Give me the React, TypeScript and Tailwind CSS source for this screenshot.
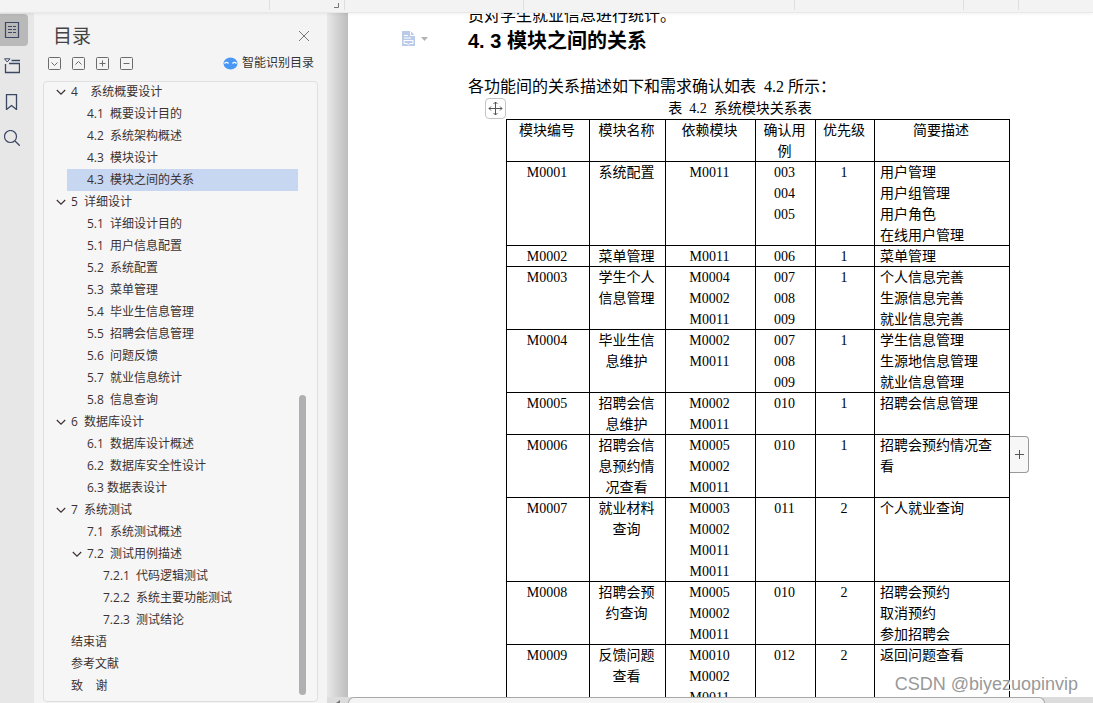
import cn from "clsx";
import type { ReactNode } from "react";

type OutlineItem = {
  level: 1 | 2 | 3;
  label: string;
  open?: boolean;
  active?: boolean;
};

type ModuleRow = {
  id: string;
  name: string;
  depends: string[];
  cases: string[];
  priority: number;
  description: string[];
};

const outline: OutlineItem[] = [
  { level: 1, label: "4    系统概要设计", open: true },
  { level: 2, label: "4.1  概要设计目的" },
  { level: 2, label: "4.2  系统架构概述" },
  { level: 2, label: "4.3  模块设计" },
  { level: 2, label: "4.3  模块之间的关系", active: true },
  { level: 1, label: "5  详细设计", open: true },
  { level: 2, label: "5.1  详细设计目的" },
  { level: 2, label: "5.1  用户信息配置" },
  { level: 2, label: "5.2  系统配置" },
  { level: 2, label: "5.3  菜单管理" },
  { level: 2, label: "5.4  毕业生信息管理" },
  { level: 2, label: "5.5  招聘会信息管理" },
  { level: 2, label: "5.6  问题反馈" },
  { level: 2, label: "5.7  就业信息统计" },
  { level: 2, label: "5.8  信息查询" },
  { level: 1, label: "6  数据库设计", open: true },
  { level: 2, label: "6.1  数据库设计概述" },
  { level: 2, label: "6.2  数据库安全性设计" },
  { level: 2, label: "6.3 数据表设计" },
  { level: 1, label: "7  系统测试", open: true },
  { level: 2, label: "7.1  系统测试概述" },
  { level: 2, label: "7.2  测试用例描述", open: true },
  { level: 3, label: "7.2.1  代码逻辑测试" },
  { level: 3, label: "7.2.2  系统主要功能测试" },
  { level: 3, label: "7.2.3  测试结论" },
  { level: 1, label: "结束语" },
  { level: 1, label: "参考文献" },
  { level: 1, label: "致    谢" },
];

const modules: ModuleRow[] = [
  {
    id: "M0001",
    name: "系统配置",
    depends: ["M0011"],
    cases: ["003", "004", "005"],
    priority: 1,
    description: ["用户管理", "用户组管理", "用户角色", "在线用户管理"],
  },
  {
    id: "M0002",
    name: "菜单管理",
    depends: ["M0011"],
    cases: ["006"],
    priority: 1,
    description: ["菜单管理"],
  },
  {
    id: "M0003",
    name: "学生个人信息管理",
    depends: ["M0004", "M0002", "M0011"],
    cases: ["007", "008", "009"],
    priority: 1,
    description: ["个人信息完善", "生源信息完善", "就业信息完善"],
  },
  {
    id: "M0004",
    name: "毕业生信息维护",
    depends: ["M0002", "M0011"],
    cases: ["007", "008", "009"],
    priority: 1,
    description: ["学生信息管理", "生源地信息管理", "就业信息管理"],
  },
  {
    id: "M0005",
    name: "招聘会信息维护",
    depends: ["M0002", "M0011"],
    cases: ["010"],
    priority: 1,
    description: ["招聘会信息管理"],
  },
  {
    id: "M0006",
    name: "招聘会信息预约情况查看",
    depends: ["M0005", "M0002", "M0011"],
    cases: ["010"],
    priority: 1,
    description: ["招聘会预约情况查看"],
  },
  {
    id: "M0007",
    name: "就业材料查询",
    depends: ["M0003", "M0002", "M0011", "M0011"],
    cases: ["011"],
    priority: 2,
    description: ["个人就业查询"],
  },
  {
    id: "M0008",
    name: "招聘会预约查询",
    depends: ["M0005", "M0002", "M0011"],
    cases: ["010"],
    priority: 2,
    description: ["招聘会预约", "取消预约", "参加招聘会"],
  },
  {
    id: "M0009",
    name: "反馈问题查看",
    depends: ["M0010", "M0002", "M0011"],
    cases: ["012"],
    priority: 2,
    description: ["返回问题查看"],
  },
];

const columns = [
  { title: "模块编号", width: "w-[83px]" },
  { title: "模块名称", width: "w-[76px]" },
  { title: "依赖模块", width: "w-[90px]" },
  { title: "确认用例", width: "w-[60px]" },
  { title: "优先级", width: "w-[59px]" },
  { title: "简要描述", width: "w-[135px]" },
];

const Stroke = ({
  children,
  className,
  size = 16,
}: {
  children: ReactNode;
  className?: string;
  size?: number;
}) => (
  <svg
    width={size}
    height={size}
    viewBox={`0 0 ${size} ${size}`}
    fill="none"
    stroke="currentColor"
    className={cn("shrink-0", className)}
    aria-hidden
  >
    {children}
  </svg>
);

const railButtons = [
  {
    name: "目录",
    icon: (
      <>
        <path d="M1.500 .5h13v15h-13z" strokeWidth="1.2" />
        <path d="M4 4.500h4M9 4.500h3M4 7.500h4M9 7.500h3M4 10.500h4M9 10.500h3" />
      </>
    ),
  },
  {
    name: "章节",
    icon: (
      <>
        <path d="M.5 .8h5.500L3.200 4z" />
        <path d="M7.500 2.500H16M1.500 6v8.500h14v-9H5" strokeWidth="1.3" />
      </>
    ),
  },
  {
    name: "书签",
    icon: <path d="M2.500 .7h10v14.800l-5-4-5 4z" strokeWidth="1.3" />,
  },
  {
    name: "查找",
    icon: (
      <>
        <circle cx="6.500" cy="6.500" r="6" strokeWidth="1.2" />
        <path d="m11 11 4.800 4.800" strokeWidth="1.3" />
      </>
    ),
  },
];

const levelButtons = [
  { name: "展开", path: "m3.500 5.500 3 3 3-3" },
  { name: "收起", path: "m3.500 7.500 3-3 3 3" },
  { name: "全部展开", path: "M3.500 6.500h6M6.500 3.500v6" },
  { name: "全部收起", path: "M3.500 6.500h6" },
];

const Toolbar = () => (
  <header className="relative z-10 flex h-[13px] shrink-0 border-b border-[#e8e8e8] bg-[#f3f3f3] shadow-[0_1px_3px_rgba(0,0,0,0.06)]">
    <div className="h-2.5 w-[270px] border-r border-[#dedede]" />
    <div className="flex h-2.5 w-[75px] items-end justify-end border-r border-[#dedede]">
      <Stroke size={5} className="mr-[5px] mb-0.5 text-[#777]">
        <path d="M4.500 0v4.500H0" />
      </Stroke>
    </div>
    <div className="h-2.5 w-[179px] border-r border-[#dedede]" />
    <div className="h-2.5 w-[271px] border-r border-[#dedede]" />
    <div className="h-2.5 w-[169px] border-r border-[#dedede]" />
    <div className="h-2.5 w-[55px] border-r border-[#dedede]" />
  </header>
);

const Rail = () => (
  <nav
    aria-label="导航窗格"
    className="flex w-[34px] shrink-0 flex-col gap-1 bg-[#e7e7e7] pt-px text-[#3b4763]"
  >
    {railButtons.map(({ name, icon }, index) => (
      <button
        key={name}
        type="button"
        aria-label={name}
        className={cn("flex h-8 w-7 items-center rounded-r pl-1", {
          "bg-[#b9b9b9]": index === 0,
        })}
      >
        <Stroke>{icon}</Stroke>
      </button>
    ))}
  </nav>
);

const OutlineRow = ({ level, label, open, active }: OutlineItem) => (
  <li
    className={cn({
      "ml-[7px]": level === 1,
      "ml-[23px]": level === 2,
      "ml-[39px]": level === 3,
    })}
  >
    <a
      href="#section"
      aria-current={active}
      className={cn(
        "flex h-[22px] items-center pl-[5px] whitespace-pre",
        { "bg-[#c7d6f1]": active },
      )}
    >
      <span className="w-[15px]">
        {open && (
          <Stroke size={10}>
            <path d="m.8 3 4.200 4.200L9.200 3" strokeWidth="1.2" />
          </Stroke>
        )}
      </span>
      {label}
    </a>
  </li>
);

const OutlinePanel = () => (
  <aside className="flex w-[293px] shrink-0 flex-col bg-[#f4f4f4] px-[9px] text-[#3c3230]">
    <div className="flex items-center justify-between pt-2 pr-2 pl-[10px]">
      <h2 className="text-[19px] leading-[30px] text-[#444]">目录</h2>
      <button type="button" aria-label="关闭" className="text-[#777]">
        <Stroke size={12}>
          <path d="m1 1 10 10M11 1 1 11" />
        </Stroke>
      </button>
    </div>
    <div className="flex h-6 items-center pr-1 pl-[5px]">
      <div className="flex gap-[11px] text-[#6b6b6b]">
        {levelButtons.map(({ name, path }) => (
          <button key={name} type="button" aria-label={name}>
            <Stroke size={13}>
              <rect x=".5" y=".5" width="12" height="12" rx="1" />
              <path d={path} />
            </Stroke>
          </button>
        ))}
      </div>
      <button
        type="button"
        className="ml-auto flex items-center gap-1 text-xs text-[#333]"
      >
        <svg width="15" height="13" viewBox="0 0 15 13" aria-hidden>
          <ellipse cx="7.500" cy="6.500" rx="7" ry="6" fill="#4a98f5" />
          <path
            d="M1.500 6.500q2-2.400 4 0M9.500 6.500q2-2.400 4 0"
            fill="none"
            stroke="#fff"
            strokeWidth="1.2"
          />
        </svg>
        智能识别目录
      </button>
    </div>
    <div className="mt-1.5 mb-px flex min-h-0 flex-1 overflow-hidden rounded border border-[#dfdfdf] bg-[#f6f6f6]">
      <ul className="-mt-px flex-1 text-xs">
        {outline.map((item, index) => (
          <OutlineRow key={index} {...item} />
        ))}
      </ul>
      <div className="flex w-[19px] flex-col justify-end pb-1.5 pl-px">
        <div className="h-[49%] w-[7px] rounded-full bg-[#b0b0b2]" />
      </div>
    </div>
  </aside>
);

const Cell = ({
  lines,
  left = false,
}: {
  lines: (string | number)[];
  left?: boolean;
}) => (
  <td
    className={cn("border border-black pr-1.5 align-top", {
      "pl-1 text-center": !left,
      "pl-[5px]": left,
    })}
  >
    <div className="-mb-px">
      {lines.map((line, index) => (
        <p key={index}>{line}</p>
      ))}
    </div>
  </td>
);

const ModuleTable = () => (
  <div className="relative ml-[38px] w-[504px]">
    <table className="w-full table-fixed border-collapse text-sm leading-[21px]">
      <caption className="pr-9 text-sm leading-5 whitespace-pre">
        表  4.2  系统模块关系表
      </caption>
      <thead>
        <tr>
          {columns.map(({ title, width }) => (
            <th
              key={title}
              scope="col"
              className={cn(
                "border border-black pr-1.5 pl-1 text-center align-top font-normal",
                width,
              )}
            >
              <div className="-mb-px">{title}</div>
            </th>
          ))}
        </tr>
      </thead>
      <tbody>
        {modules.map((row) => (
          <tr key={row.id}>
            <Cell lines={[row.id]} />
            <Cell lines={[row.name]} />
            <Cell lines={row.depends} />
            <Cell lines={row.cases} />
            <Cell lines={[row.priority]} />
            <Cell lines={row.description} left />
          </tr>
        ))}
      </tbody>
    </table>
    <button
      type="button"
      aria-label="移动表格"
      className="absolute -top-px -left-[21px] flex size-[21px] items-center justify-center rounded-sm border border-[#c4c4c4] bg-white text-[#555]"
    >
      <Stroke size={15}>
        <path d="M7.500 1v13M1 7.500h13M5.500 3l2-2 2 2M5.500 12l2 2 2-2M3 5.500l-2 2 2 2M12 5.500l2 2-2 2" />
      </Stroke>
    </button>
    <button
      type="button"
      aria-label="添加列"
      className="absolute top-[337px] left-full flex h-[37px] w-[19px] items-center justify-center rounded-r border border-l-0 border-[#999] bg-[#f7f7f7] text-[#555]"
    >
      <Stroke size={9}>
        <path d="M0 4.500h9M4.500 0v9" />
      </Stroke>
    </button>
  </div>
);

const DocumentPage = () => (
  <article className="relative flex-1 overflow-hidden bg-white pl-[120px] font-['Liberation_Serif','Noto_Sans_CJK_SC',serif] text-black">
    <p className="-mt-2 text-base leading-[22px]">
      员对学生就业信息进行统计。
    </p>
    <h1 className="mb-5 font-['Liberation_Sans','Noto_Sans_CJK_SC',sans-serif] text-xl leading-7 font-bold">
      4. 3 模块之间的关系
    </h1>
    <p className="text-base leading-6 whitespace-pre">
      各功能间的关系描述如下和需求确认如表  4.2 所示：
    </p>
    <ModuleTable />
    <button
      type="button"
      aria-label="段落格式"
      className="absolute top-[18px] left-[54px] flex items-center gap-1.5"
    >
      <svg width="13" height="15" viewBox="0 0 13 15" aria-hidden>
        <path d="M0 0h8.500L13 4.500V15H0z" fill="#b9cbe8" />
        <path
          d="M8.500 0v4.500H13M2 4.500h4M2 7h7M2 9.500h9v3H8l-1.500 1.300L5 12.500H2z"
          fill="none"
          stroke="#fff"
        />
      </svg>
      <svg width="7" height="4" viewBox="0 0 7 4" aria-hidden>
        <path d="M0 0h7L3.500 4z" fill="#b3b3b3" />
      </svg>
    </button>
  </article>
);

const App = () => (
  <div className="relative flex h-screen flex-col overflow-hidden bg-[#f4f4f4] font-['Open_Sans','Noto_Sans_CJK_SC',sans-serif]">
    <Toolbar />
    <div className="flex min-h-0 flex-1">
      <Rail />
      <OutlinePanel />
      <main className="flex min-w-0 flex-1 flex-col">
        <div className="flex min-h-0 flex-1">
          <div className="w-[21px] shrink-0 bg-linear-to-r from-[#e8e8e8] to-[#bdbdbd]" />
          <DocumentPage />
        </div>
        <div className="flex h-1.5 shrink-0 bg-[#dcdcdc] pr-12">
          <div className="flex w-[21px] items-end justify-center">
            <svg width="4" height="3" viewBox="0 0 4 3" aria-hidden>
              <path d="M4 0v3H0z" fill="#777" />
            </svg>
          </div>
          <div className="flex-1 rounded-t-md border border-b-0 border-[#a8a8a8] bg-[#f4f4f4]" />
        </div>
      </main>
    </div>
    <p className="absolute right-[15px] bottom-[7px] font-['Liberation_Sans',sans-serif] text-lg leading-6 text-[#999] [text-shadow:1px_1px_0_#fff]">
      CSDN @biyezuopinvip
    </p>
  </div>
);

export default App;
